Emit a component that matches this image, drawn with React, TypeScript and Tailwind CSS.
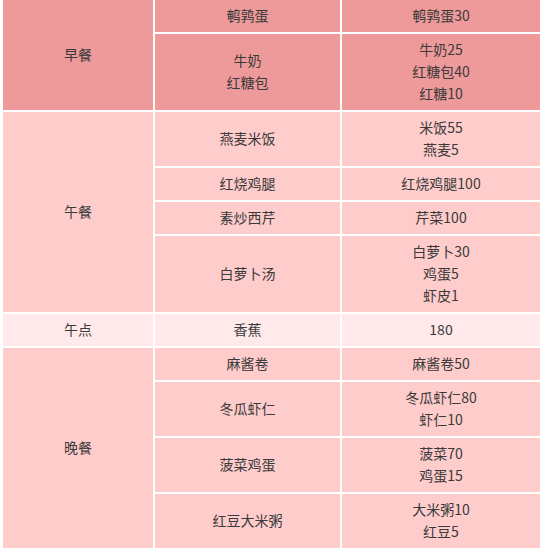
import React from "react";

type Cell = { lines: string[]; bg: string; row: string; col: string };

const B = "bg-[#ee9a9a]";
const L = "bg-[#ffcccc]";
const S = "bg-[#ffe9ea]";

const cells: Cell[] = [
  { lines: ["早餐"], bg: B, row: "row-span-2", col: "col-start-1" },
  { lines: ["鹌鹑蛋"], bg: B, row: "", col: "col-start-2" },
  { lines: ["鹌鹑蛋30"], bg: B, row: "", col: "col-start-3" },
  { lines: ["牛奶", "红糖包"], bg: B, row: "", col: "col-start-2" },
  { lines: ["牛奶25", "红糖包40", "红糖10"], bg: B, row: "", col: "col-start-3" },
  { lines: ["午餐"], bg: L, row: "row-span-4", col: "col-start-1" },
  { lines: ["燕麦米饭"], bg: L, row: "", col: "col-start-2" },
  { lines: ["米饭55", "燕麦5"], bg: L, row: "", col: "col-start-3" },
  { lines: ["红烧鸡腿"], bg: L, row: "", col: "col-start-2" },
  { lines: ["红烧鸡腿100"], bg: L, row: "", col: "col-start-3" },
  { lines: ["素炒西芹"], bg: L, row: "", col: "col-start-2" },
  { lines: ["芹菜100"], bg: L, row: "", col: "col-start-3" },
  { lines: ["白萝卜汤"], bg: L, row: "", col: "col-start-2" },
  { lines: ["白萝卜30", "鸡蛋5", "虾皮1"], bg: L, row: "", col: "col-start-3" },
  { lines: ["午点"], bg: S, row: "", col: "col-start-1" },
  { lines: ["香蕉"], bg: S, row: "", col: "col-start-2" },
  { lines: ["180"], bg: S, row: "", col: "col-start-3" },
  { lines: ["晚餐"], bg: L, row: "row-span-4", col: "col-start-1" },
  { lines: ["麻酱卷"], bg: L, row: "", col: "col-start-2" },
  { lines: ["麻酱卷50"], bg: L, row: "", col: "col-start-3" },
  { lines: ["冬瓜虾仁"], bg: L, row: "", col: "col-start-2" },
  { lines: ["冬瓜虾仁80", "虾仁10"], bg: L, row: "", col: "col-start-3" },
  { lines: ["菠菜鸡蛋"], bg: L, row: "", col: "col-start-2" },
  { lines: ["菠菜70", "鸡蛋15"], bg: L, row: "", col: "col-start-3" },
  { lines: ["红豆大米粥"], bg: L, row: "", col: "col-start-2" },
  { lines: ["大米粥10", "红豆5"], bg: L, row: "", col: "col-start-3" },
];

export default function App() {
  return (
    <div className="w-[540px] h-[548px] bg-white overflow-hidden pl-[3px]">
      <div
        className="grid grid-cols-[150px_185px_198px] grid-rows-[32px_76px_54px_32px_32px_76px_32px_32px_54px_54px_54px] gap-[2px] text-[14px] leading-[22px] text-[#3a3a3a]"
        style={{ fontFamily: '"Microsoft YaHei", "Noto Sans CJK SC", "Noto Sans", sans-serif' }}
      >
        {cells.map((c, i) => (
          <div
            key={i}
            className={`${c.bg} ${c.row} ${c.col} flex flex-col items-center justify-center text-center pb-[2px]`}
          >
            {c.lines.map((t, j) => (
              <div key={j}>{t}</div>
            ))}
          </div>
        ))}
      </div>
    </div>
  );
}
